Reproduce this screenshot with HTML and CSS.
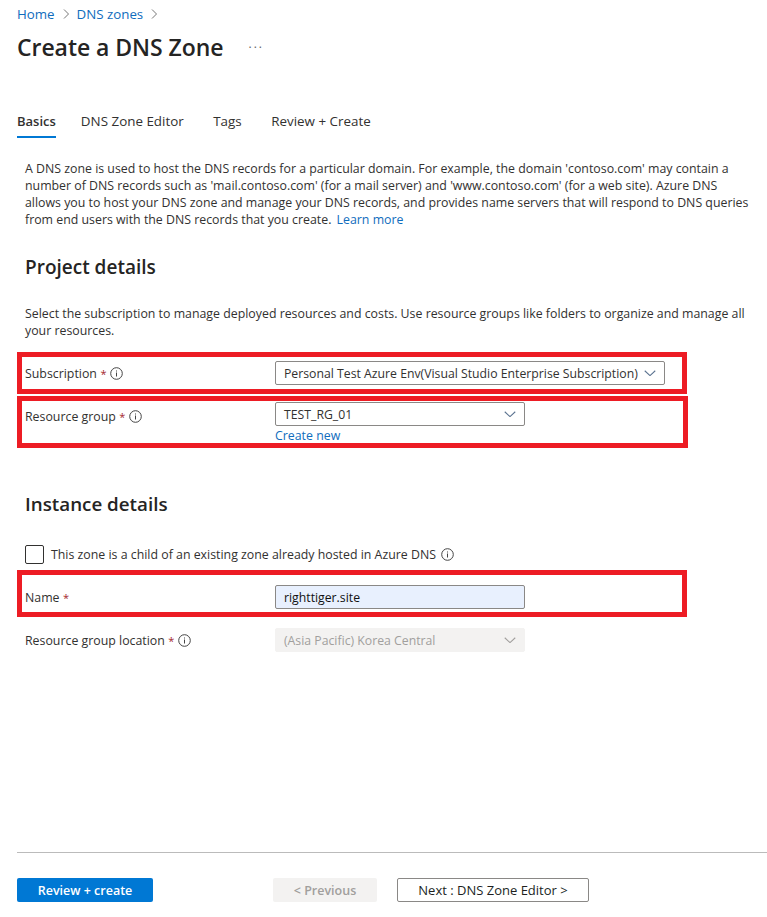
FILE: index.html
```html
<!DOCTYPE html>
<html lang="en">

<head>
    <meta charset="UTF-8">
    <title>Create a DNS Zone</title>
    <link rel="stylesheet" href="styles.css">
</head>

<body>
    <svg class="defs" width="0" height="0">
        <symbol id="info" viewBox="0 0 13 13">
            <circle cx="6.5" cy="6.5" r="5.8" fill="none" stroke="#444" stroke-width="1" />
            <rect x="6" y="5.5" width="1" height="4" fill="#444" />
            <rect x="6" y="3.5" width="1" height="1" fill="#444" />
        </symbol>
        <symbol id="chev" viewBox="0 0 16 8">
            <path d="M1 1l7 6.5L15 1" fill="none" stroke="currentColor" stroke-width="1.4" />
        </symbol>
    </svg>

    <nav class="crumbs">
        <a href="#">Home</a>
        <svg class="crumb-sep" viewBox="0 0 6 10"><path d="M1 .5L5.5 5 1 9.5" /></svg>
        <a href="#">DNS zones</a>
        <svg class="crumb-sep" viewBox="0 0 6 10"><path d="M1 .5L5.5 5 1 9.5" /></svg>
    </nav>

    <div class="title-row">
        <h1>Create a DNS Zone</h1>
        <span class="more">...</span>
    </div>

    <div class="tabs">
        <div class="tab active">Basics</div>
        <div class="tab">DNS Zone Editor</div>
        <div class="tab">Tags</div>
        <div class="tab">Review + Create</div>
    </div>

    <main class="content">
        <p class="intro">A DNS zone is used to host the DNS records for a particular domain. For example, the domain 'contoso.com' may contain a<br>number of DNS records such as 'mail.contoso.com' (for a mail server) and 'www.contoso.com' (for a web site). Azure DNS<br>allows you to host your DNS zone and manage your DNS records, and provides name servers that will respond to DNS queries<br>from end users with the DNS records that you create. <a class="learn" href="#">Learn more</a></p>

        <h2 class="project-head">Project details</h2>
        <p class="sub-text">Select the subscription to manage deployed resources and costs. Use resource groups like folders to organize and manage all<br>your resources.</p>

        <div class="row marked sub-row">
            <label>Subscription <span class="req">*</span> <svg class="info"><use href="#info" /></svg></label>
            <div class="select wide">
                <span>Personal Test Azure Env(Visual Studio Enterprise Subscription)</span>
                <svg class="chev"><use href="#chev" /></svg>
            </div>
        </div>

        <div class="row marked group-row">
            <label>Resource group <span class="req">*</span> <svg class="info"><use href="#info" /></svg></label>
            <div class="field">
                <div class="select">
                    <span>TEST_RG_01</span>
                    <svg class="chev"><use href="#chev" /></svg>
                </div>
                <a class="create-new" href="#">Create new</a>
            </div>
        </div>

        <h2 class="instance-head">Instance details</h2>

        <div class="check-row">
            <span class="checkbox"></span>
            <span>This zone is a child of an existing zone already hosted in Azure DNS</span>
            <svg class="info"><use href="#info" /></svg>
        </div>

        <div class="row marked name-row">
            <label>Name <span class="req">*</span></label>
            <div class="select filled"><span>righttiger.site</span></div>
        </div>

        <div class="row location-row">
            <label>Resource group location <span class="req">*</span> <svg class="info"><use href="#info" /></svg></label>
            <div class="select disabled">
                <span>(Asia Pacific) Korea Central</span>
                <svg class="chev"><use href="#chev" /></svg>
            </div>
        </div>
    </main>

    <footer class="footer">
        <button class="btn primary">Review + create</button>
        <button class="btn prev">&lt; Previous</button>
        <button class="btn next">Next : DNS Zone Editor &gt;</button>
    </footer>
</body>

</html>
```

FILE: styles.css
```css
* {
    box-sizing: border-box;
}

body {
    margin: 0;
    height: 917px;
    width: 767px;
    overflow: hidden;
    background-color: white;
    color: #323130;
    font-family: "Open Sans", "Noto Sans", sans-serif;
    font-size: 12.35px;
}

a {
    color: #0f6cbd;
    text-decoration: none;
}

.defs {
    position: absolute;
}

/* ------------------Header------------------- */
.crumbs {
    display: flex;
    align-items: center;
    gap: 8px;
    height: 16px;
    margin: 6px 0 0 17px;
    font-size: 13.3px;
}

.crumb-sep {
    width: 6px;
    height: 10px;
    fill: none;
    stroke: #777;
}

.title-row {
    display: flex;
    align-items: center;
    height: 34px;
    margin: 8px 0 0 17px;
}

h1 {
    margin: 0;
    font-size: 23px;
    font-weight: 600;
    color: #252423;
    letter-spacing: -0.05px;
}

.more {
    margin: -8px 0 0 25px;
    color: #666;
    font-size: 12px;
    letter-spacing: 2px;
}

/* ------------------Tabs------------------- */
.tabs {
    display: flex;
    margin: 44px 0 0 17px;
    height: 30px;
}

.tab {
    margin-right: 29.5px;
    padding-top: 4px;
    font-size: 13.4px;
}

.tab.active {
    margin-right: 25px;
    font-size: 13px;
    font-weight: 600;
    border-bottom: 2px solid #0078d4;
}

/* ------------------Form------------------- */
.content {
    padding-left: 25px;
}

.intro {
    margin: 22px 0 0;
    line-height: 17px;
    width: 735px;
    white-space: nowrap;
}

.learn {
    margin-left: 2px;
}

h2 {
    margin: 0;
    font-size: 19px;
    font-weight: 600;
    line-height: 24px;
    color: #252423;
}

.project-head {
    margin-top: 27px;
}

.sub-text {
    margin: 26px 0 0;
    line-height: 17px;
    white-space: nowrap;
}

.row {
    display: flex;
    align-items: flex-start;
    width: 670px;
    margin-left: -8px;
    padding-left: 8px;
}

.row label {
    display: flex;
    align-items: center;
    gap: 3.5px;
    width: 250px;
    flex-shrink: 0;
    height: 24px;
}

.marked {
    border: 5px solid #ed1c24;
    padding-left: 3px;
}

.sub-row {
    height: 42px;
    margin-top: 13px;
    padding-top: 4px;
}

.group-row {
    width: 671px;
    height: 52px;
    margin-top: 2px;
    padding-top: 1px;
}

.group-row label {
    margin-top: 2px;
}

.req {
    color: #a4262c;
    font-size: 11px;
}

.info {
    width: 13px;
    height: 13px;
}

.select {
    display: flex;
    align-items: center;
    justify-content: space-between;
    width: 250px;
    height: 24px;
    padding: 0 8px;
    border: 1px solid #8a8886;
    border-radius: 2px;
    color: #323130;
    font-size: 12.25px;
}

.select.wide {
    width: 390px;
}

.chev {
    width: 12px;
    height: 6px;
    color: #5b7390;
}

.create-new {
    display: block;
    margin-top: 2px;
    line-height: 16px;
}

.instance-head {
    margin-top: 44px;
    font-size: 18.8px;
}

.check-row {
    display: flex;
    align-items: center;
    gap: 7px;
    height: 19px;
    margin-top: 29px;
}

.check-row .info {
    margin-left: -2px;
}

.checkbox {
    width: 19px;
    height: 19px;
    border: 1px solid #323130;
    border-radius: 2px;
}

.name-row {
    height: 47px;
    margin-top: 6px;
    padding-top: 10px;
}

.select.filled {
    background-color: #e8f0fe;
    color: #111;
}

.location-row {
    margin-top: 11px;
}

.select.disabled {
    background-color: #f3f2f1;
    border-color: #f3f2f1;
    color: #a19f9d;
}

.select.disabled .chev {
    color: #a19f9d;
}

/* ------------------Footer------------------- */
.footer {
    display: flex;
    align-items: flex-start;
    height: 65px;
    margin: 200px 0 0 17px;
    padding-top: 25px;
    border-top: 1px solid #bbb;
}

.btn {
    height: 24px;
    border-radius: 2px;
    font-family: inherit;
    font-size: 12.5px;
    padding: 0;
    border: 1px solid transparent;
}

.primary {
    width: 136px;
    background-color: #0078d4;
    color: white;
    font-weight: 600;
}

.prev {
    width: 104px;
    margin-left: 120px;
    background-color: #f3f2f1;
    color: #a19f9d;
    font-weight: 600;
}

.next {
    width: 192px;
    margin-left: 20px;
    background-color: white;
    border-color: #8a8886;
    color: #201f1e;
    font-size: 13px;
}
```
